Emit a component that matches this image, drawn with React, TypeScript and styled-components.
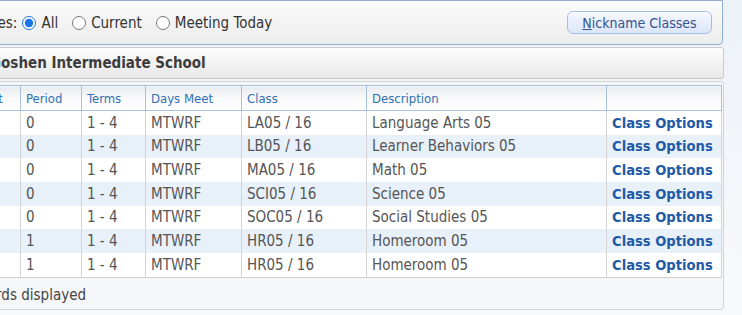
import React from 'react';
import styled, { createGlobalStyle } from 'styled-components';

const font = `"DejaVu Sans Condensed", "Liberation Sans", sans-serif`;

const GlobalStyle = createGlobalStyle`
  html, body {
    margin: 0;
    padding: 0;
    overflow: hidden;
  }
  body {
    background: linear-gradient(180deg, #edf2f9 0%, #f8f9fb 100%);
    min-height: 315px;
    font-family: ${font};
  }
`;

const Page = styled.div`
  width: 773px;
  margin-left: -49px;
  display: flex;
  flex-direction: column;
  gap: 2px;
`;

const FilterBar = styled.div`
  height: 43px;
  margin-right: 1px;
  display: flex;
  align-items: center;
  justify-content: space-between;
  padding: 0 10px 0 10px;
  border: 1px solid #93afd0;
  border-radius: 0 0 4px 4px;
  background: linear-gradient(180deg, #fbfbfb 0%, #ececec 100%);
  font-size: 15px;
  color: #333;
`;

const RadioGroup = styled.div`
  display: flex;
  align-items: center;
`;

const Label = styled.span`
  margin-right: 5px;
`;

const RadioOption = styled.label`
  display: flex;
  align-items: center;
  margin-right: 14px;
  cursor: pointer;

  input {
    width: 14px;
    height: 14px;
    margin: 0 5px 0 0;
    accent-color: #1a73e8;
  }
`;

const NicknameButton = styled.button`
  width: 145px;
  height: 23px;
  padding: 0;
  border: 1px solid #a3bde3;
  border-radius: 6px;
  background: linear-gradient(180deg, #f6f8fe 0%, #dce5fa 100%);
  box-shadow: inset 0 1px 0 #ffffff;
  font-family: ${font};
  font-size: 14px;
  color: #34528f;
  cursor: pointer;

  u {
    text-decoration-color: #34528f;
  }
`;

const SchoolBar = styled.div`
  height: 30px;
  display: flex;
  align-items: center;
  padding-left: 38px;
  border: 1px solid #cacaca;
  border-radius: 3px;
  background: linear-gradient(180deg, #fcfcfc 0%, #e8e8e8 100%);
  font-size: 15px;
  font-weight: bold;
  color: #3c3c3c;
`;

const ListPanel = styled.div`
  padding: 3px 2px 0 2px;
  border: 1px solid #d4d4d4;
  border-radius: 3px;
  background: #f4f6f8;
`;

const Table = styled.table`
  width: 767px;
  border-collapse: collapse;
  table-layout: fixed;
  border: 1px solid #cfcfcf;
  border-top-color: #aac2de;
  font-size: 15px;
`;

const HeadCell = styled.th`
  height: 24px;
  padding: 0 5px;
  text-align: left;
  font-weight: normal;
  font-size: 13px;
  color: #2f6fb5;
  background: linear-gradient(180deg, #e8ebef 0%, #fbfbfc 55%, #ffffff 100%);
  border: 1px solid #aac2de;
  white-space: nowrap;
  overflow: hidden;
`;

const Row = styled.tr<{ $alt: boolean }>`
  background: ${(p) => (p.$alt ? '#e8f0fa' : '#ffffff')};
`;

const Cell = styled.td`
  height: 23.66px;
  padding: 0 5px;
  color: #555;
  border-left: 1px solid #d4d4d4;
  border-right: 1px solid #d4d4d4;
  white-space: nowrap;
  overflow: hidden;
`;

const OptionsLink = styled.a`
  font-weight: bold;
  font-size: 14.6px;
  color: #1f5aa6;
  text-decoration: none;
  cursor: pointer;
`;

const Footer = styled.div`
  box-sizing: border-box;
  height: 31px;
  display: flex;
  align-items: center;
  padding: 4px 0 0 0;
  font-size: 15px;
  color: #444;
`;

const columns = [
  { label: 'Default', width: 66 },
  { label: 'Period', width: 61 },
  { label: 'Terms', width: 64 },
  { label: 'Days Meet', width: 96 },
  { label: 'Class', width: 125 },
  { label: 'Description', width: 240 },
  { label: '', width: 115 },
];

const classes = [
  { period: '0', terms: '1 - 4', days: 'MTWRF', code: 'LA05 / 16', desc: 'Language Arts 05' },
  { period: '0', terms: '1 - 4', days: 'MTWRF', code: 'LB05 / 16', desc: 'Learner Behaviors 05' },
  { period: '0', terms: '1 - 4', days: 'MTWRF', code: 'MA05 / 16', desc: 'Math 05' },
  { period: '0', terms: '1 - 4', days: 'MTWRF', code: 'SCI05 / 16', desc: 'Science 05' },
  { period: '0', terms: '1 - 4', days: 'MTWRF', code: 'SOC05 / 16', desc: 'Social Studies 05' },
  { period: '1', terms: '1 - 4', days: 'MTWRF', code: 'HR05 / 16', desc: 'Homeroom 05' },
  { period: '1', terms: '1 - 4', days: 'MTWRF', code: 'HR05 / 16', desc: 'Homeroom 05' },
];

const App: React.FC = () => {
  return (
    <>
      <GlobalStyle />
      <Page>
        <FilterBar>
          <RadioGroup>
            <Label>Classes:</Label>
            <RadioOption>
              <input type="radio" name="show" defaultChecked />
              All
            </RadioOption>
            <RadioOption>
              <input type="radio" name="show" />
              Current
            </RadioOption>
            <RadioOption>
              <input type="radio" name="show" />
              Meeting Today
            </RadioOption>
          </RadioGroup>
          <NicknameButton>
            <u>N</u>ickname Classes
          </NicknameButton>
        </FilterBar>

        <SchoolBar>Goshen Intermediate School</SchoolBar>

        <ListPanel>
          <Table>
            <colgroup>
              {columns.map((c, i) => (
                <col key={i} style={{ width: c.width }} />
              ))}
            </colgroup>
            <thead>
              <tr>
                {columns.map((c, i) => (
                  <HeadCell key={i}>{c.label}</HeadCell>
                ))}
              </tr>
            </thead>
            <tbody>
              {classes.map((c, i) => (
                <Row key={i} $alt={i % 2 === 1}>
                  <Cell />
                  <Cell>{c.period}</Cell>
                  <Cell>{c.terms}</Cell>
                  <Cell>{c.days}</Cell>
                  <Cell>{c.code}</Cell>
                  <Cell>{c.desc}</Cell>
                  <Cell>
                    <OptionsLink>Class Options</OptionsLink>
                  </Cell>
                </Row>
              ))}
            </tbody>
          </Table>
          <Footer>7 records displayed</Footer>
        </ListPanel>
      </Page>
    </>
  );
};

export default App;
